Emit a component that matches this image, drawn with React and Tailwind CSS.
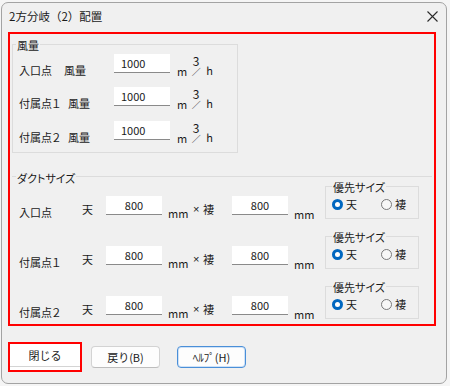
const inputCls = "h-[19px] w-[56px] bg-white border-b border-[#8a8a8a] leading-[19px]";

function Unit() {
  return (
    <div className="flex items-start ml-[7px]">
      <span className="mt-[10px] leading-[14px]">m</span>
      <div className="flex flex-col items-center w-[10px] ml-[4px]">
        <span className="mt-[1px] leading-[11px] text-[12px]">3</span>
        <span className="mt-[1px] leading-[9px] text-[9px] [font-feature-settings:normal]">／</span>
      </div>
      <span className="ml-[5px] mt-[9px] leading-[14px]">h</span>
    </div>
  );
}

function AirRow({ a, b, aw, bw, mt }) {
  return (
    <div className={`flex items-start h-[20px] pl-[6px] ${mt}`}>
      <span className={`mt-[9px] leading-[14px] ${aw}`}>{a}</span>
      <span className={`mt-[9px] leading-[14px] ${bw}`}>{b}</span>
      <div className={`${inputCls} pl-[7px]`}>1000</div>
      <Unit />
    </div>
  );
}

function Radio({ on }) {
  if (on) {
    return (
      <span className="w-[11px] h-[11px] rounded-full bg-[#0067c0] flex items-center justify-center">
        <span className="w-[5px] h-[5px] rounded-full bg-white"></span>
      </span>
    );
  }
  return <span className="w-[11px] h-[11px] rounded-full border border-[#7a7a7a] bg-[#f7f7f7]"></span>;
}

function Priority() {
  return (
    <div className="w-[94px] h-[33px] border border-[#dcdcdc]">
      <div className="-mt-[7px] ml-[6px] px-[1px] w-fit bg-[#f0f0f0] leading-[14px]">優先サイズ</div>
      <div className="flex items-center mt-[3px] ml-[6px] h-[14px]">
        <div className="flex items-center w-[49px]">
          <Radio on />
          <span className="ml-[3px] leading-[14px]">天</span>
        </div>
        <div className="flex items-center">
          <Radio />
          <span className="ml-[3px] leading-[14px]">褄</span>
        </div>
      </div>
    </div>
  );
}

function DuctRow({ label, h }) {
  return (
    <div className={`flex items-start pl-[7px] ${h}`}>
      <span className="w-[63px] mt-[19px] leading-[14px]">{label}</span>
      <span className="w-[24px] mt-[16px] leading-[14px]">天</span>
      <div className={`${inputCls} mt-[10px] text-center`}>800</div>
      <span className="ml-[6px] w-[25px] mt-[20px] leading-[14px]">mm</span>
      <span className="w-[10px] mt-[16px] leading-[14px] font-['Liberation_Sans',sans-serif]">×</span>
      <span className="w-[29px] mt-[16px] leading-[14px]">褄</span>
      <div className={`${inputCls} mt-[10px] text-center`}>800</div>
      <span className="ml-[6px] w-[31px] mt-[21px] leading-[14px]">mm</span>
      <Priority />
    </div>
  );
}

export default function App() {
  return (
    <div className="w-[450px] h-[386px] overflow-hidden bg-[#f5f5f5] pt-[2px] pl-[1px] text-[11px] text-[#1a1a1a] font-['Noto_Sans_CJK_JP',sans-serif]">
      <div className="w-[446px] h-[382px] border border-[#a3a3a3] rounded-[7px] bg-[#f0f0f0] flex flex-col">
        <div className="h-[26px] shrink-0 flex items-center justify-between pl-[7px] pr-[8px]">
          <span className="leading-[16px] text-[11.5px]">2方分岐（2）配置</span>
          <svg width="11" height="11" viewBox="0 0 11 11">
            <path d="M0.5 0.5 L10.5 10.5 M10.5 0.5 L0.5 10.5" stroke="#2a2a2a" strokeWidth="1.1" fill="none" />
          </svg>
        </div>
        <div className="ml-[6px] mt-[3px] w-[428px] h-[294px] shrink-0 border-2 border-[#ff0000] [font-feature-settings:'palt']">
          <div className="ml-[2px] mt-[10px] w-[226px] h-[109px] border border-[#dcdcdc]">
            <div className="-mt-[7px] ml-[3px] px-[1px] w-fit bg-[#f0f0f0] leading-[14px]">風量</div>
            <AirRow a="入口点" b="風量" aw="w-[45px]" bw="w-[50px]" mt="mt-[2px]" />
            <AirRow a="付属点１" b="風量" aw="w-[49px]" bw="w-[46px]" mt="mt-[13px]" />
            <AirRow a="付属点２" b="風量" aw="w-[49px]" bw="w-[46px]" mt="mt-[14px]" />
          </div>
          <div className="ml-[2px] mt-[23px] w-[420px] h-[147px] border-t border-[#dcdcdc]">
            <div className="-mt-[6px] ml-[4px] px-[1px] w-fit bg-[#f0f0f0] leading-[14px]">ダクトサイズ</div>
            <div className="mt-[1px]">
              <DuctRow label="入口点" h="h-[50px]" />
              <DuctRow label="付属点１" h="h-[50px]" />
              <DuctRow label="付属点２" h="h-[38px]" />
            </div>
          </div>
        </div>
        <div className="flex items-center mt-[16px] ml-[6px]">
          <div className="w-[74px] h-[30px] border-2 border-[#ff0000] bg-white">
            <div className="h-[23px] border-b border-[#d4d4d4] flex items-center justify-center leading-[14px]">閉じる</div>
          </div>
          <div className="ml-[9px] w-[69px] h-[22px] rounded-[4px] border border-[#d3d3d3] border-b-[#bdbdbd] bg-[#fdfdfd] flex items-center justify-center leading-[14px]">戻り(B)</div>
          <div className="ml-[17px] w-[69px] h-[22px] rounded-[4px] border border-[#4a8fd8] bg-[#fdfdfd] shadow-[inset_0_0_0_1px_#cfe2f7] flex items-center justify-center leading-[14px]">ﾍﾙﾌﾟ(H)</div>
        </div>
      </div>
    </div>
  );
}
